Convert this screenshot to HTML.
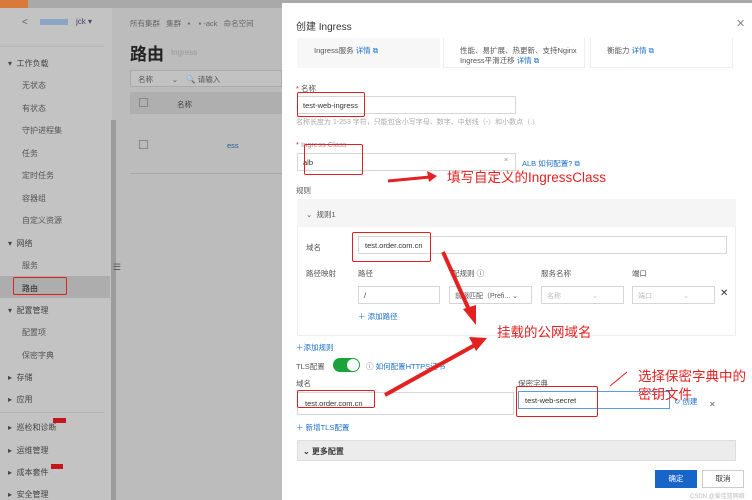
<!DOCTYPE html>
<html><head><meta charset="utf-8"><style>
*{box-sizing:border-box;margin:0;padding:0}
body{width:752px;height:500px;overflow:hidden;position:relative;background:#bcbcbc;font-family:"Liberation Sans","Noto Sans CJK SC",sans-serif;font-size:8px;color:#333}
.a{position:absolute;white-space:nowrap}
.sb{left:0;top:8px;width:112px;height:492px;background:#c3c3c3}
.si{left:22px;font-size:8px;color:#555}
.sg{left:8px;font-size:8px;color:#444}
.inp{position:absolute;background:#fff;border:1px solid #d6d6d6}
.red{position:absolute;border:1.5px solid #e02020;border-radius:2px}
.lbl{font-size:7.5px;color:#555}
.link{color:#1a6fc9}
.ann{color:#e52020;font-size:13.5px}
</style></head><body>
<div class="a" style="left:0;top:0;width:752px;height:8px;background:#a9a9a9"></div>
<div class="a" style="left:0;top:0;width:28px;height:8px;background:#d87a3a"></div>
<div class="a sb"></div>
<div class="a" style="left:111px;top:120px;width:5px;height:380px;background:#9c9c9c"></div>
<div class="a" style="left:22px;top:17px;font-size:10px;color:#666">&lt;</div>
<div class="a" style="left:40px;top:19px;width:28px;height:6px;background:#8aa6c4"></div>
<div class="a" style="left:76px;top:17px;font-size:8px;color:#446">jck ▾</div>
<div class="a" style="left:0;top:46px;width:104px;height:1px;background:#b6b6b6"></div>
<div class="a sg" style="top:58px">▾ &nbsp;工作负载</div>
<div class="a si" style="top:80px">无状态</div>
<div class="a si" style="top:103px">有状态</div>
<div class="a si" style="top:125px">守护进程集</div>
<div class="a si" style="top:148px">任务</div>
<div class="a si" style="top:170px">定时任务</div>
<div class="a si" style="top:193px">容器组</div>
<div class="a si" style="top:215px">自定义资源</div>
<div class="a sg" style="top:238px">▾ &nbsp;网络</div>
<div class="a si" style="top:260px">服务</div>
<div class="a" style="left:0;top:276px;width:110px;height:22px;background:#adadad"></div>
<div class="red" style="left:13px;top:277px;width:54px;height:18px"></div>
<div class="a si" style="top:283px;color:#222">路由</div>
<div class="a sg" style="top:305px">▾ &nbsp;配置管理</div>
<div class="a si" style="top:327px">配置项</div>
<div class="a si" style="top:350px">保密字典</div>
<div class="a sg" style="top:372px">▸ &nbsp;存储</div>
<div class="a sg" style="top:394px">▸ &nbsp;应用</div>
<div class="a" style="left:0;top:412px;width:104px;height:1px;background:#b3b3b3"></div>
<div class="a sg" style="top:422px">▸ &nbsp;巡检和诊断</div>
<div class="a" style="left:53px;top:418px;width:13px;height:5px;background:#c4161c"></div>
<div class="a sg" style="top:445px">▸ &nbsp;运维管理</div>
<div class="a sg" style="top:467px">▸ &nbsp;成本套件</div>
<div class="a" style="left:51px;top:464px;width:12px;height:5px;background:#c4161c"></div>
<div class="a sg" style="top:489px">▸ &nbsp;安全管理</div>
<div class="a" style="left:113px;top:262px;font-size:9px;color:#555">☰</div>
<div class="a" style="left:130px;top:18px;font-size:7.5px;color:#666">所有集群 &nbsp; 集群 &nbsp; ▪ &nbsp; &nbsp;▪ -ack &nbsp; 命名空间</div>
<div class="a" style="left:130px;top:40px;font-size:17px;color:#222;font-weight:bold">路由</div>
<div class="a" style="left:171px;top:48px;font-size:8px;color:#999">Ingress</div>
<div class="a" style="left:130px;top:70px;width:152px;height:17px;border:1px solid #aaa;background:#c2c2c2"></div>
<div class="a" style="left:138px;top:74px;font-size:7.5px;color:#555">名称 &nbsp; &nbsp; &nbsp; &nbsp; ⌄ &nbsp; &nbsp;🔍 请输入</div>
<div class="a" style="left:130px;top:92px;width:152px;height:22px;background:#afafaf"></div>
<div class="a" style="left:139px;top:98px;width:9px;height:9px;border:1px solid #888"></div>
<div class="a" style="left:177px;top:99px;font-size:7.5px;color:#444">名称</div>
<div class="a" style="left:139px;top:140px;width:9px;height:9px;border:1px solid #888"></div>
<div class="a" style="left:227px;top:141px;font-size:7.5px;color:#2a5a9a">ess</div>
<div class="a" style="left:130px;top:173px;width:152px;height:1px;background:#aaa"></div>
<div class="a" style="left:282px;top:3px;width:470px;height:497px;background:#fff"></div>
<div class="a" style="left:296px;top:18px;font-size:10px;color:#333">创建 Ingress</div>
<div class="a" style="left:736px;top:17px;font-size:11px;color:#888">✕</div>
<div class="a" style="left:297px;top:38px;width:143px;height:30px;background:#f7f7f7"></div>
<div class="a" style="left:443px;top:38px;width:142px;height:30px;border:1px solid #eee;border-top:0"></div>
<div class="a" style="left:590px;top:38px;width:143px;height:30px;border:1px solid #eee;border-top:0"></div>
<div class="a lbl" style="left:314px;top:45px">Ingress服务 <span class="link">详情 ⧉</span></div>
<div class="a lbl" style="left:460px;top:45px">性能、易扩展、热更新、支持Nginx</div>
<div class="a lbl" style="left:460px;top:55px">Ingress平滑迁移 <span class="link">详情 ⧉</span></div>
<div class="a lbl" style="left:607px;top:45px">衡能力 <span class="link">详情 ⧉</span></div>
<div class="a lbl" style="left:296px;top:83px"><span style="color:#e22">*</span> 名称</div>
<div class="inp" style="left:297px;top:96px;width:219px;height:18px"></div>
<div class="a" style="left:303px;top:101px;font-size:7.5px">test-web-ingress</div>
<div class="red" style="left:297px;top:92px;width:68px;height:25px"></div>
<div class="a" style="left:296px;top:117px;font-size:7px;color:#aaa">名称长度为 1-253 字符，只能包含小写字母、数字、中划线（-）和小数点（.）</div>
<div class="a lbl" style="left:296px;top:140px;color:#999"><span style="color:#e22">*</span> Ingress Class</div>
<div class="inp" style="left:297px;top:153px;width:219px;height:18px"></div>
<div class="a" style="left:303px;top:158px;font-size:7.5px">alb</div>
<div class="a" style="left:504px;top:157px;font-size:7px;color:#888">×</div>
<div class="red" style="left:304px;top:144px;width:59px;height:31px"></div>
<div class="a link" style="left:522px;top:158px;font-size:7.5px">ALB 如何配置? ⧉</div>
<div class="a ann" style="left:447px;top:166px">填写自定义的IngressClass</div>
<div class="a lbl" style="left:296px;top:185px">规则</div>
<div class="a" style="left:297px;top:199px;width:439px;height:137px;border:1px solid #eee;background:#fff"></div>
<div class="a" style="left:297px;top:199px;width:439px;height:28px;background:#f5f5f5"></div>
<div class="a lbl" style="left:306px;top:209px">⌄ &nbsp;规则1</div>
<div class="a lbl" style="left:306px;top:242px">域名</div>
<div class="inp" style="left:358px;top:236px;width:369px;height:18px"></div>
<div class="a" style="left:365px;top:241px;font-size:7.5px">test.order.com.cn</div>
<div class="red" style="left:352px;top:232px;width:79px;height:30px"></div>
<div class="a lbl" style="left:306px;top:268px">路径映射</div>
<div class="a lbl" style="left:358px;top:268px">路径</div>
<div class="a lbl" style="left:452px;top:268px">配规则 ⓘ</div>
<div class="a lbl" style="left:541px;top:268px">服务名称</div>
<div class="a lbl" style="left:632px;top:268px">端口</div>
<div class="inp" style="left:358px;top:286px;width:82px;height:18px"></div>
<div class="a" style="left:364px;top:291px;font-size:7.5px">/</div>
<div class="inp" style="left:449px;top:286px;width:83px;height:18px"></div>
<div class="a" style="left:455px;top:291px;font-size:7px;color:#555">前缀匹配（Prefi... ⌄</div>
<div class="inp" style="left:541px;top:286px;width:83px;height:18px"></div>
<div class="a" style="left:547px;top:291px;font-size:7px;color:#bbb">名称 &nbsp; &nbsp; &nbsp; &nbsp; &nbsp; &nbsp; &nbsp; &nbsp;⌄</div>
<div class="inp" style="left:632px;top:286px;width:83px;height:18px"></div>
<div class="a" style="left:638px;top:291px;font-size:7px;color:#bbb">端口 &nbsp; &nbsp; &nbsp; &nbsp; &nbsp; &nbsp; &nbsp; &nbsp;⌄</div>
<div class="a" style="left:720px;top:288px;font-size:10px;color:#333">✕</div>
<div class="a link" style="left:358px;top:311px;font-size:7.5px">＋ 添加路径</div>
<div class="a ann" style="left:497px;top:321px">挂载的公网域名</div>
<div class="a link" style="left:296px;top:342px;font-size:7.5px">＋添加规则</div>
<div class="a lbl" style="left:296px;top:361px">TLS配置</div>
<div class="a" style="left:333px;top:358px;width:27px;height:14px;border-radius:7px;background:#1aa33a"></div>
<div class="a" style="left:347px;top:359px;width:12px;height:12px;border-radius:6px;background:#fff"></div>
<div class="a link" style="left:366px;top:361px;font-size:7.5px"><span style="color:#666">ⓘ</span> 如何配置HTTPS证书</div>
<div class="a lbl" style="left:296px;top:378px">域名</div>
<div class="inp" style="left:297px;top:392px;width:217px;height:23px"></div>
<div class="a" style="left:305px;top:399px;font-size:7.5px">test.order.com.cn</div>
<div class="red" style="left:297px;top:390px;width:78px;height:18px"></div>
<div class="a lbl" style="left:518px;top:378px">保密字典</div>
<div class="inp" style="left:518px;top:391px;width:152px;height:18px;border-color:#5b9be0"></div>
<div class="a" style="left:525px;top:396px;font-size:7.5px">test-web-secret</div>
<div class="a" style="left:657px;top:395px;font-size:7px;color:#888">×</div>
<div class="red" style="left:516px;top:386px;width:82px;height:31px"></div>
<div class="a link" style="left:674px;top:396px;font-size:7.5px">↻ 创建</div>
<div class="a" style="left:709px;top:400px;font-size:8px;color:#666">✕</div>
<div class="a ann" style="left:638px;top:368px;line-height:18px">选择保密字典中的<br>密钥文件</div>
<div class="a link" style="left:296px;top:422px;font-size:7.5px">＋ 新增TLS配置</div>
<div class="a" style="left:297px;top:440px;width:439px;height:21px;background:#ececec;border:1px solid #ddd"></div>
<div class="a" style="left:303px;top:446px;font-size:8px;font-weight:bold;color:#333">⌄ 更多配置</div>
<div class="a" style="left:655px;top:470px;width:42px;height:18px;background:#1765c8;color:#fff;font-size:7.5px;text-align:center;line-height:18px">确定</div>
<div class="a" style="left:702px;top:470px;width:42px;height:18px;border:1px solid #ccc;font-size:7.5px;text-align:center;line-height:16px">取消</div>
<div class="a" style="left:690px;top:491px;font-size:6px;color:#bbb">CSDN @爱佳篮网络</div>
<svg class="a" style="left:0;top:0" width="752" height="500">
<g fill="#e52020" stroke="#e52020">
<line x1="388" y1="181" x2="430" y2="177" stroke-width="3"/>
<polygon points="437,176 427,171 429,182" stroke="none"/>
<line x1="443" y1="252" x2="470" y2="312" stroke-width="4"/>
<polygon points="476,325 463,309 476,305" stroke="none"/>
<line x1="385" y1="395" x2="475" y2="345" stroke-width="4"/>
<polygon points="487,338 469,337 476,351" stroke="none"/>
<line x1="610" y1="386" x2="627" y2="372" stroke-width="1"/>
</g></svg>
</body></html>
